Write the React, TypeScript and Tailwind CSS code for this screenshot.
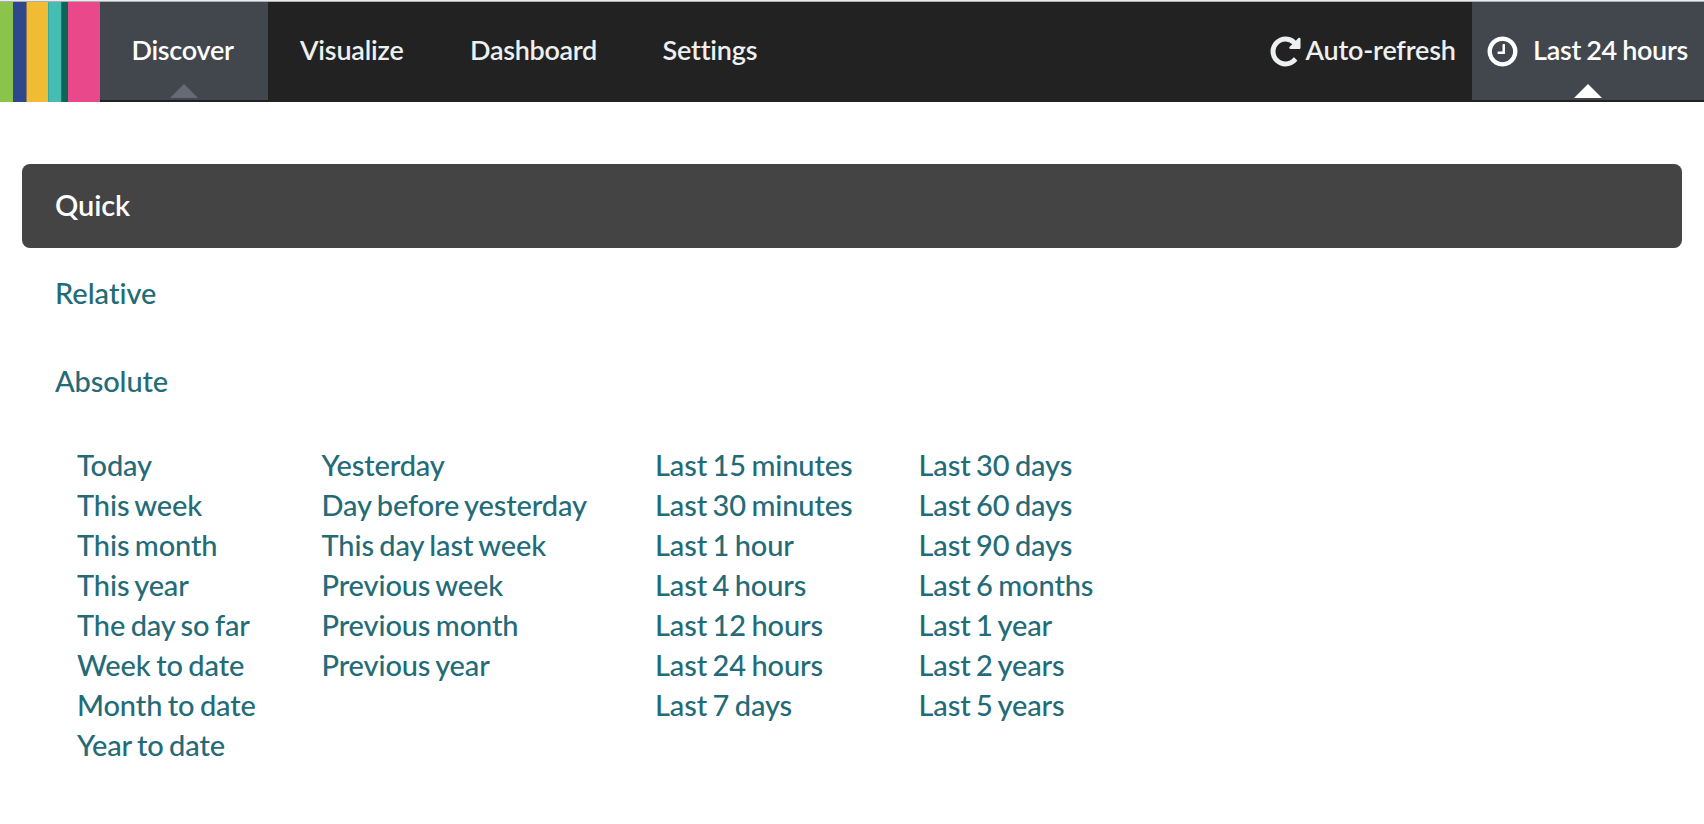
const COLUMNS: string[][] = [
  ["Today", "This week", "This month", "This year", "The day so far", "Week to date", "Month to date", "Year to date"],
  ["Yesterday", "Day before yesterday", "This day last week", "Previous week", "Previous month", "Previous year"],
  ["Last 15 minutes", "Last 30 minutes", "Last 1 hour", "Last 4 hours", "Last 12 hours", "Last 24 hours", "Last 7 days"],
  ["Last 30 days", "Last 60 days", "Last 90 days", "Last 6 months", "Last 1 year", "Last 2 years", "Last 5 years"],
];

function Logo() {
  return (
    <div className="flex h-[100px] w-[100px] shrink-0">
      <div className="w-[13px] bg-[#8ac44b]" />
      <div className="w-[13px] bg-[#2f478c]" />
      <div className="w-px bg-[#947a50]" />
      <div className="w-[21px] bg-[#f1bc33]" />
      <div className="w-px bg-[#3ba99e]" />
      <div className="w-[12px] bg-[#45bdb2]" />
      <div className="w-px bg-[#167d6f]" />
      <div className="w-[6px] bg-[#0b6657]" />
      <div className="w-[32px] bg-[#e9498b]" />
    </div>
  );
}

function Caret({ className }: { className: string }) {
  return (
    <svg viewBox="0 0 28 14" className={`absolute bottom-[2px] left-1/2 h-[14px] w-[28px] -translate-x-1/2 ${className}`}>
      <path d="M0 14 14 0l14 14z" fill="currentColor" />
    </svg>
  );
}

function RepeatIcon() {
  return (
    <svg viewBox="0 0 1792 1792" fill="currentColor" className="size-[35px] shrink-0">
      <path d="M1664 256v448q0 26-19 45t-45 19h-448q-42 0-59-40-17-39 14-69l138-138q-148-137-349-137-104 0-198.5 40.5t-163.5 109.5-109.5 163.5-40.5 198.5 40.5 198.5 109.5 163.5 163.5 109.5 198.5 40.5q119 0 225-52t179-147q7-10 23-12 15 0 25 9l137 138q9 8 9.5 20.5t-7.5 22.5q-109 132-264 204.5t-327 72.5q-156 0-298-61t-245-164-164-245-61-298 61-298 164-245 245-164 298-61q147 0 284.5 55.5t244.5 156.5l130-129q29-31 70-14 39 17 39 59z" />
    </svg>
  );
}

function ClockIcon() {
  return (
    <svg viewBox="0 0 1792 1792" fill="currentColor" className="size-[35px] shrink-0">
      <path d="M1024 544v448q0 14-9 23t-23 9h-320q-14 0-23-9t-9-23v-64q0-14 9-23t23-9h224v-352q0-14 9-23t23-9h64q14 0 23 9t9 23zm416 352q0-148-73-273t-198-198-273-73-273 73-198 198-73 273 73 273 198 198 273 73 273-73 198-198 73-273zm224 0q0 209-103 385.5t-279.5 279.5-385.5 103-385.5-103-279.5-279.5-103-385.5 103-385.5 279.5-279.5 385.5-103 385.5 103 279.5 279.5 103 385.5z" />
    </svg>
  );
}

export default function App() {
  return (
    <div className="h-[824px] w-[1704px] overflow-hidden bg-white font-['Lato',sans-serif] text-[#246b78] [font-variant-ligatures:none]">
      <div className="h-px bg-[#ececec]" />
      <div className="h-px bg-[#adb0b0]" />
      <header className="flex h-[100px] items-start bg-[#222222] text-[27px] leading-[40px] font-semibold tracking-[-0.2px] text-[#ecf0f1] [word-spacing:-1.2px]">
        <Logo />
        <nav className="flex h-[98px] whitespace-nowrap">
          <a className="relative flex w-[168px] items-center bg-[#42464d] pb-[2px] pl-[31.5px] tracking-[-0.3px] text-white">
            Discover
            <Caret className="text-[#656a76]" />
          </a>
          <a className="flex items-center pr-[34.5px] pb-[2px] pl-8">Visualize</a>
          <a className="flex items-center pr-[33.5px] pb-[2px] pl-8 tracking-[-0.3px]">Dashboard</a>
          <a className="flex items-center px-8 pb-[2px]">Settings</a>
        </nav>
        <div className="ml-auto flex h-[98px] whitespace-nowrap">
          <a className="flex w-[204px] items-center gap-[2.5px]">
            <RepeatIcon />
            <span className="pb-[2px]">Auto-refresh</span>
          </a>
          <a className="relative flex w-[232px] items-center gap-[13.5px] bg-[#42464d] pl-[12.5px] tracking-[-0.3px] text-white">
            <ClockIcon />
            <span className="pb-[2px]">Last 24 hours</span>
            <Caret className="text-white" />
          </a>
        </div>
      </header>
      <main className="px-[22px] pt-[62px] text-[29px] leading-[40px] font-medium tracking-[-0.12px] [word-spacing:-1.7px]">
        <ul className="flex flex-col gap-[4px]">
          <li className="flex h-[84px] items-center rounded-[8px] bg-[#444444] px-[33px] pb-[2px] font-semibold text-white">Quick</li>
          <li className="flex h-[84px] items-center px-[33px] pb-[2px] tracking-normal">Relative</li>
          <li className="flex h-[84px] items-center px-[33px] pb-[2px]">Absolute</li>
        </ul>
        <div className="grid grid-cols-[244.5px_333.5px_263.5px_300px] pt-[21px] pl-[55px]">
          {COLUMNS.map((items) => (
            <ul key={items[0]} className="whitespace-nowrap">
              {items.map((item) => (
                <li key={item}>{item}</li>
              ))}
            </ul>
          ))}
        </div>
      </main>
    </div>
  );
}
